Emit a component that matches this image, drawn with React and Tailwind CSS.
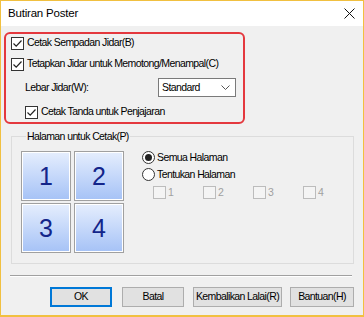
import React from "react";

const font = { fontFamily: '"Liberation Sans", Arial, sans-serif' };

const Check = ({ checked = true, disabled = false }) => (
  <span
    className={`w-[13px] h-[13px] shrink-0 border flex items-center justify-center ${
      disabled ? "border-[#bcbcbc] bg-[#f4f4f4]" : "border-[#333] bg-white"
    }`}
  >
    {checked && (
      <svg width="11" height="11" viewBox="0 0 11 11">
        <path d="M1.5 5.5 L4.2 8.2 L9.5 2.5" fill="none" stroke="#222" strokeWidth="1.2" />
      </svg>
    )}
  </span>
);

const Radio = ({ selected }) => (
  <span className="w-[13px] h-[13px] shrink-0 rounded-full border border-[#333] bg-white flex items-center justify-center">
    {selected && <span className="w-[7px] h-[7px] rounded-full bg-[#222]" />}
  </span>
);

const Tile = ({ n }) => (
  <div className="w-[50px] h-[50px] border border-[#a0a0a0] bg-white p-px">
    <div className="w-full h-full bg-gradient-to-b from-[#e4edfd] to-[#a7c3f6] flex items-center justify-center text-[25px] text-[#13258a] leading-none tracking-normal">
      {n}
    </div>
  </div>
);

const Button = ({ children, w, primary }) => (
  <button
    className={`${w} h-[20px] bg-[#e1e1e1] text-black whitespace-nowrap flex items-center justify-center ${
      primary ? "border-2 border-[#0078d7]" : "border border-[#adadad]"
    }`}
  >
    {children}
  </button>
);

export default function App() {
  return (
    <div
      className="w-[364px] h-[317px] border-x border-t border-b-2 border-[#f1c040] bg-[#f0f0f0] flex flex-col text-[10.5px] tracking-[-0.6px] text-black overflow-hidden"
      style={font}
    >
      {/* Title bar */}
      <div className="h-[25px] bg-white flex items-center justify-between pl-[7px] pr-[8px]">
        <span className="text-[11.5px] tracking-[-0.2px]">Butiran Poster</span>
        <svg width="11" height="11" viewBox="0 0 11 11">
          <path d="M0.5 0.5 L10.5 10.5 M10.5 0.5 L0.5 10.5" stroke="#111" strokeWidth="1" />
        </svg>
      </div>

      {/* Highlighted options */}
      <div className="ml-[3px] mt-[6px] w-[241px] h-[92px] border-2 border-[#e4383e] rounded-[6px] pl-[5px] flex flex-col">
        <label className="h-[18px] flex items-center gap-[3px]">
          <Check />
          <span>Cetak Sempadan Jidar(B)</span>
        </label>
        <label className="h-[18px] mt-[3px] flex items-center gap-[3px]">
          <Check />
          <span>Tetapkan Jidar untuk Memotong/Menampal(C)</span>
        </label>
        <div className="h-[19px] mt-[5px] flex items-center">
          <span className="ml-[14px]">Lebar Jidar(W):</span>
          <div className="ml-auto mr-[7px] w-[78px] h-[19px] border border-[#7a7a7a] bg-white flex items-center justify-between pl-[3px] pr-[5px]">
            <span>Standard</span>
            <svg width="9" height="5" viewBox="0 0 9 5">
              <path d="M0.5 0.5 L4.5 4.5 L8.5 0.5" fill="none" stroke="#555" strokeWidth="1" />
            </svg>
          </div>
        </div>
        <label className="h-[18px] mt-[6px] ml-[14px] flex items-center gap-[3px]">
          <Check />
          <span>Cetak Tanda untuk Penjajaran</span>
        </label>
      </div>

      {/* Pages group */}
      <fieldset className="ml-[10px] mt-[6px] w-[343px] border border-[#dcdcdc] pl-[9px] pt-[8px] pb-[10px] flex">
        <legend className="ml-[5px] px-[1px] leading-[13px]">Halaman untuk Cetak(P)</legend>
        <div className="flex">
          <div className="grid grid-cols-2 gap-x-[3px] gap-y-[2px]">
            <Tile n="1" />
            <Tile n="2" />
            <Tile n="3" />
            <Tile n="4" />
          </div>
          <div className="ml-[18px] -mt-[2px] flex flex-col">
            <label className="h-[17px] flex items-center gap-[2px]">
              <Radio selected />
              <span>Semua Halaman</span>
            </label>
            <label className="h-[17px] flex items-center gap-[2px]">
              <Radio />
              <span>Tentukan Halaman</span>
            </label>
            <div className="h-[17px] mt-[1px] ml-[11px] flex items-center">
              {["1", "2", "3", "4"].map((n) => (
                <div key={n} className="w-[50px] flex items-center gap-[2px] text-[#a0a0a0]">
                  <Check checked={false} disabled />
                  <span>{n}</span>
                </div>
              ))}
            </div>
          </div>
        </div>
      </fieldset>

      {/* Separator */}
      <div className="ml-[9px] mt-[11px] w-[342px] border-t border-[#a0a0a0] border-b border-b-white" />

      {/* Buttons */}
      <div className="mt-[10px] ml-[49px] flex">
        <Button w="w-[62px]" primary>OK</Button>
        <div className="ml-[10px]">
          <Button w="w-[62px]">Batal</Button>
        </div>
        <div className="ml-[9px]">
          <Button w="w-[89px]">Kembalikan Lalai(R)</Button>
        </div>
        <div className="ml-[8px]">
          <Button w="w-[64px]">Bantuan(H)</Button>
        </div>
      </div>
    </div>
  );
}
